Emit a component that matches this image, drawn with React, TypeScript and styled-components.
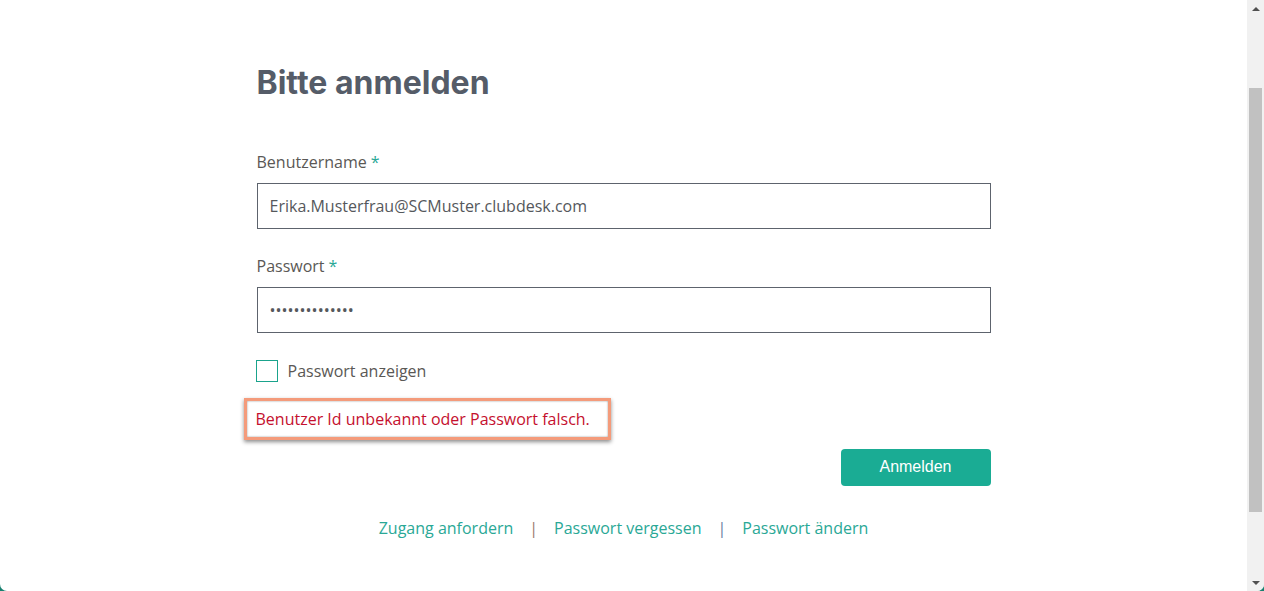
import React from "react";
import styled, { createGlobalStyle } from "styled-components";

const Global = createGlobalStyle`
  html, body { margin: 0; padding: 0; background: #17806f; }
  body { font-family: "Open Sans", "Liberation Sans", sans-serif; }
  * { box-sizing: border-box; }
`;

const Frame = styled.div`
  display: flex;
  height: 591px;
  width: 1264px;
  background: #ffffff;
  border-radius: 0 0 7px 7px;
  overflow: hidden;
`;

const Main = styled.main`
  flex: 1;
  display: flex;
  justify-content: center;
`;

const Form = styled.form`
  width: 734px;
  display: flex;
  flex-direction: column;
  padding-top: 65px;
`;

const Title = styled.h1`
  margin: 0 0 49px 0;
  font-family: Inter, "Noto Sans", sans-serif;
  font-weight: 700;
  font-size: 32px;
  line-height: 36px;
  color: #555c68;
`;

const Label = styled.label`
  font-size: 16px;
  line-height: 24px;
  color: #5a5855;
  margin-bottom: 9px;
`;

const Star = styled.span`
  color: #2aa896;
  margin-left: 4px;
`;

const Input = styled.input<{ $gapAfter: number }>`
  height: 46px;
  width: 100%;
  border: 1.5px solid #5d636d;
  border-radius: 0;
  padding: 0 12px;
  font-family: "Open Sans", "Liberation Sans", sans-serif;
  font-size: 16px;
  color: #55585c;
  margin-bottom: ${(p) => p.$gapAfter}px;
  outline: none;
  background: #fff;
`;

const CheckRow = styled.label`
  display: flex;
  align-items: center;
  gap: 10px;
  height: 22px;
  line-height: 20px;
  margin-bottom: 16px;
  font-size: 16px;
  color: #5a5855;
  cursor: pointer;
`;

const Box = styled.span`
  width: 22px;
  height: 22px;
  border: 1px solid #1aa38c;
  background: #fff;
  margin-left: -1px;
`;

const ErrorBox = styled.div`
  align-self: flex-start;
  margin-left: -13px;
  border: 3px solid #f49b7b;
  padding: 6px 18px 6px 9px;
  box-shadow: 0 2px 4px rgba(0, 0, 0, 0.45), inset 0 0 2px rgba(0, 0, 0, 0.45);
  color: #c5102e;
  font-size: 16px;
  line-height: 24px;
  margin-bottom: 9px;
`;

const ButtonRow = styled.div`
  display: flex;
  justify-content: flex-end;
  margin-bottom: 30px;
`;

const Button = styled.button`
  width: 150px;
  height: 37px;
  border: none;
  border-radius: 4px;
  background: #1aac94;
  color: #fff;
  font-family: "Liberation Sans", Arial, sans-serif;
  font-size: 16px;
  line-height: 35px;
  padding: 0 0 2px 0;
`;

const Links = styled.nav`
  display: flex;
  justify-content: center;
  align-items: center;
  gap: 16px;
  font-size: 16px;
  line-height: 24px;
`;

const Link = styled.a`
  color: #2aa896;
  text-decoration: none;
`;

const Sep = styled.span<{ $c: string }>`
  color: ${(p) => p.$c};
`;

const Scrollbar = styled.div`
  width: 17px;
  background: #f1f1f1;
  display: flex;
  flex-direction: column;
  align-items: center;
`;

const Arrow = styled.div<{ $up?: boolean }>`
  height: 17px;
  display: flex;
  align-items: center;
  justify-content: center;
  &::before {
    content: "";
    border-left: 4px solid transparent;
    border-right: 4px solid transparent;
    ${(p) =>
      p.$up
        ? "border-bottom: 4px solid #505050;"
        : "border-top: 4px solid #505050;"}
  }
`;

const Track = styled.div`
  flex: 1;
  width: 100%;
  display: flex;
  flex-direction: column;
  align-items: center;
  padding-top: 71px;
  padding-bottom: 62px;
`;

const Thumb = styled.div`
  width: 13px;
  flex: 1;
  background: #c1c1c1;
`;

export default function App() {
  return (
    <>
      <Global />
      <Frame>
        <Main>
          <Form onSubmit={(e) => e.preventDefault()}>
            <Title>Bitte anmelden</Title>
            <Label>
              Benutzername<Star>*</Star>
            </Label>
            <Input
              $gapAfter={25}
              defaultValue="Erika.Musterfrau@SCMuster.clubdesk.com"
            />
            <Label>
              Passwort<Star>*</Star>
            </Label>
            <Input $gapAfter={27} type="password" defaultValue="abcdefghijklmn" />
            <CheckRow>
              <Box />
              Passwort anzeigen
            </CheckRow>
            <ErrorBox>Benutzer Id unbekannt oder Passwort falsch.</ErrorBox>
            <ButtonRow>
              <Button type="submit">Anmelden</Button>
            </ButtonRow>
            <Links>
              <Link href="#">Zugang anfordern</Link>
              <Sep $c="#9a7a6a">|</Sep>
              <Link href="#">Passwort vergessen</Link>
              <Sep $c="#6a7aa0">|</Sep>
              <Link href="#">Passwort ändern</Link>
            </Links>
          </Form>
        </Main>
        <Scrollbar>
          <Arrow $up />
          <Track>
            <Thumb />
          </Track>
          <Arrow />
        </Scrollbar>
      </Frame>
    </>
  );
}
